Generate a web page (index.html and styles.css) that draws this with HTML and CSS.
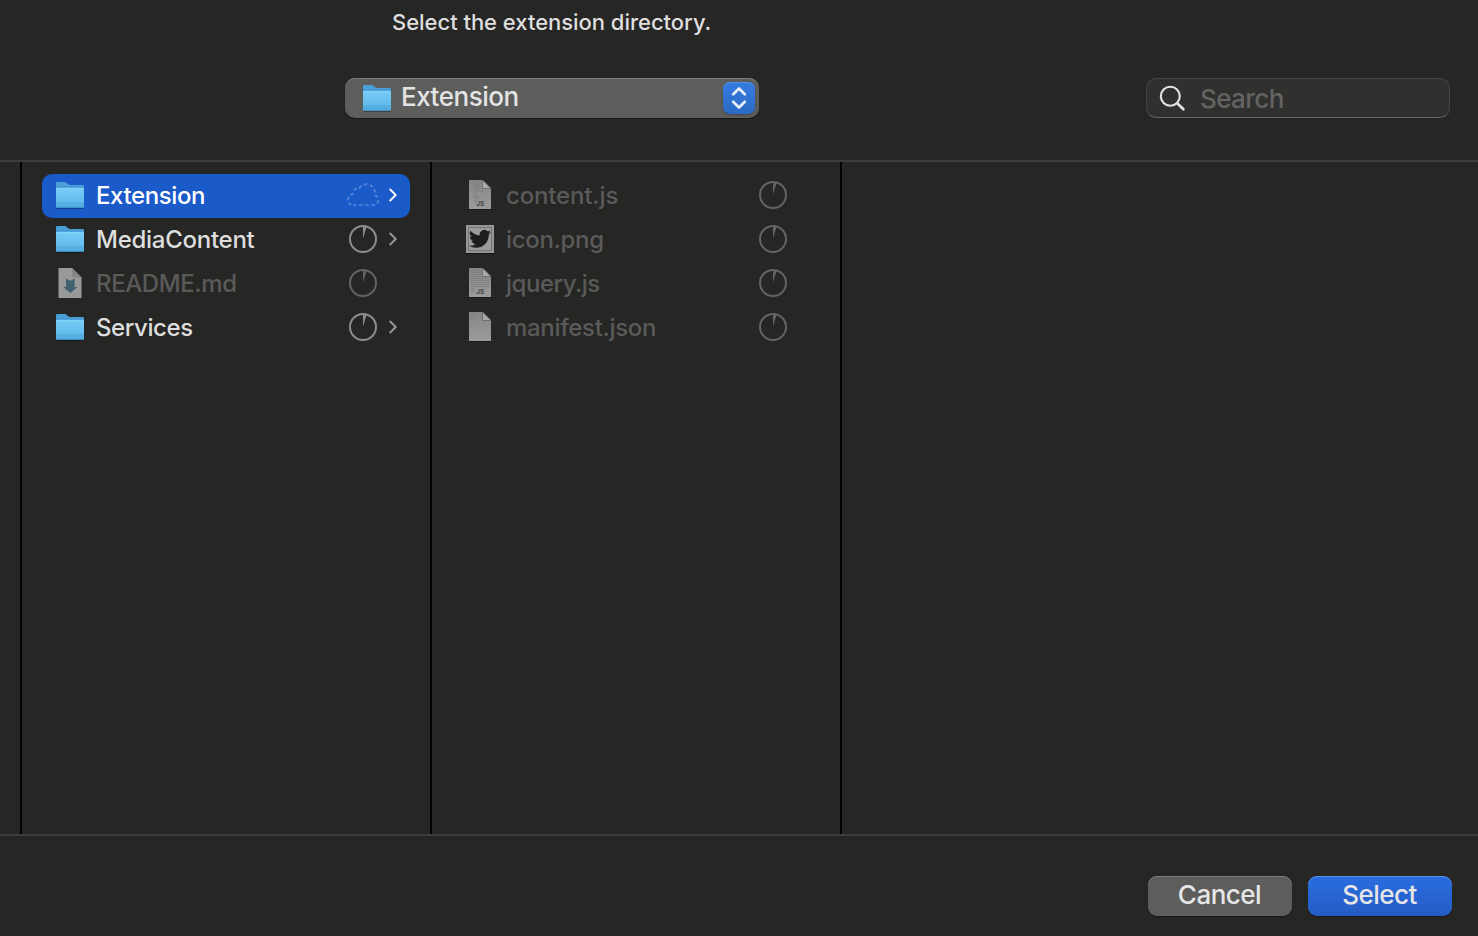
FILE: index.html
```html
<!DOCTYPE html>
<html lang="en">
<head>
<meta charset="utf-8">
<title>Select Directory</title>
<link rel="stylesheet" href="styles.css">
</head>
<body>
<svg class="defs" width="0" height="0" aria-hidden="true">
  <defs>
    <linearGradient id="folder-front" x1="0" y1="0" x2="0" y2="1">
      <stop offset="0" stop-color="#79cdf7"/><stop offset="1" stop-color="#58b4e8"/>
    </linearGradient>
    <linearGradient id="paper" x1="0" y1="0" x2="0" y2="1">
      <stop offset="0" stop-color="#868686"/><stop offset="1" stop-color="#9b9b9b"/>
    </linearGradient>
    <symbol id="folder" viewBox="0 0 32 32">
      <path d="M2.500 29.300h27" stroke="#000" stroke-opacity=".35" stroke-width="1.200"/>
      <path d="M2 4.200Q2 3 3.200 3h7.600q.9 0 1.600.7l1.800 1.600q.8.700 1.800.7h12.800q1.200 0 1.200 1.200V14H2z" fill="#4a9fd9"/>
      <path d="M2.500 8.300h27" stroke="#3184c4" stroke-width="1"/>
      <path d="M2 10q0-1.200 1.200-1.200h25.600q1.200 0 1.200 1.200v17.600q0 1.200-1.200 1.200H3.200q-1.200 0-1.200-1.200z" fill="url(#folder-front)"/>
      <path d="M3 9.300h26" stroke="#8bd8fb" stroke-width=".8"/>
      <path d="M2 24h28M2 26h28" stroke="#489fd3" stroke-width=".7"/>
      <path d="M2.500 28.200h27" stroke="#3d8fc5" stroke-width=".8"/>
    </symbol>
    <symbol id="page" viewBox="0 0 32 32">
      <path d="M5 30.400h22" stroke="#000" stroke-opacity=".35"/>
      <path d="M5 1h13.500L27 9.500V30H5z" fill="url(#paper)"/>
      <path d="M18.500 1v8.500H27z" fill="#a9a9a9" stroke="#666" stroke-width=".8"/>
    </symbol>
    <symbol id="pie" viewBox="0 0 28 28">
      <circle cx="14" cy="14" r="13" fill="none" stroke="currentColor" stroke-width="2"/>
      <path d="M14 13.500V1.500q2 0 3.600.5z" fill="currentColor"/>
    </symbol>
    <symbol id="chevron" viewBox="0 0 8 14">
      <path d="M1.200 1.500 6.700 7l-5.500 5.500" fill="none" stroke="currentColor" stroke-width="1.800" stroke-linecap="round" stroke-linejoin="round"/>
    </symbol>
  </defs>
</svg>
<div class="dialog">
  <header class="top">
    <p class="prompt">Select the extension directory.</p>
    <div class="toolbar">
      <button class="popup">
        <svg class="file-icon"><use href="#folder"/></svg>
        <span class="popup-label">Extension</span>
        <span class="stepper">
          <svg width="32" height="32" viewBox="0 0 32 32"><path d="m10.200 12.200 5.800-5.700 5.800 5.700M10.200 19.800l5.800 5.700 5.800-5.700" fill="none" stroke="#e8effb" stroke-width="2.700" stroke-linecap="round" stroke-linejoin="round"/></svg>
        </span>
      </button>
      <div class="search">
        <svg width="28" height="28" viewBox="0 0 28 28"><circle cx="11.300" cy="12.300" r="9.500" fill="none" stroke="#e2e2e2" stroke-width="2.100"/><path d="m18.200 19.300 6.200 6" stroke="#e2e2e2" stroke-width="2.700" stroke-linecap="round"/></svg>
        <span class="placeholder">Search</span>
      </div>
    </div>
  </header>
  <main class="browser">
    <div class="column gutter"></div>
    <div class="column">
      <div class="row selected">
        <svg class="file-icon"><use href="#folder"/></svg><span class="name">Extension</span>
        <svg class="cloud" viewBox="0 0 32 24"><path d="M6 22H26C29.500 22 31.200 19.800 31.200 17.200C31.200 14.500 29.800 12.800 28.200 12.200C28.600 6 24.500 1.200 19.500 1.200C15.500 1.200 13 3.400 11.800 6C8.200 4.800 5.500 7.400 5.600 11C2.500 12 .9 14.500.9 17C.9 20 3 22 6 22Z" fill="none" stroke="#5a86da" stroke-width="1.700" stroke-dasharray="3.500 2.600"/></svg>
        <svg class="chevron"><use href="#chevron"/></svg>
      </div>
      <div class="row">
        <svg class="file-icon"><use href="#folder"/></svg><span class="name wide">MediaContent</span>
        <svg class="pie"><use href="#pie"/></svg><svg class="chevron"><use href="#chevron"/></svg>
      </div>
      <div class="row disabled">
        <svg class="file-icon" viewBox="0 0 32 32"><path d="M4.500 1h13.500l9.500 9.500V31h-23z" fill="#999"/><path d="M18 1v7q0 2.500 2.500 2.500h7z" fill="#858585"/><path d="M12 11.500l4.300 2.300 4.300-2.300v8.500h2.700L16.300 26l-7-6H12z" fill="#3f626e"/></svg>
        <span class="name">README.md</span>
        <svg class="pie"><use href="#pie"/></svg><span class="chevron"></span>
      </div>
      <div class="row">
        <svg class="file-icon"><use href="#folder"/></svg><span class="name">Services</span>
        <svg class="pie"><use href="#pie"/></svg><svg class="chevron"><use href="#chevron"/></svg>
      </div>
    </div>
    <div class="column files">
      <div class="row disabled">
        <svg class="file-icon" viewBox="0 0 32 32"><use href="#page" width="32" height="32"/><path d="M8 4h5M8 6h8M10 8h6M10 10h4M10 12h9M9 14h4M8 17h7M10 19h6M10 21h4M10 23h3" stroke="#777" stroke-width=".6"/><text class="badge" x="12.300" y="27">JS</text></svg>
        <span class="name wide">content.js</span>
        <svg class="pie"><use href="#pie"/></svg><span class="chevron"></span>
      </div>
      <div class="row disabled">
        <svg class="file-icon" viewBox="0 0 32 32"><path d="M2 30.500h28" stroke="#000" stroke-opacity=".4"/><path d="M2 2h28v28H2z" fill="#969696"/><path d="M4.500 4.500h23v23h-23z" fill="#9b9b9b" stroke="#6c6c6c" stroke-width=".8"/><path transform="translate(5 4.800) scale(.92)" d="M23.950 4.570a10 10 0 0 1-2.820.77 4.960 4.960 0 0 0 2.160-2.720c-.95.550-2 .950-3.130 1.180a4.920 4.920 0 0 0-8.380 4.480C7.690 8.090 4.070 6.130 1.640 3.160a4.920 4.920 0 0 0 1.520 6.570 4.900 4.900 0 0 1-2.230-.61v.06a4.920 4.920 0 0 0 3.950 4.830 5 5 0 0 1-2.210.08 4.940 4.940 0 0 0 4.600 3.420A9.870 9.870 0 0 1 0 19.540a13.990 13.990 0 0 0 7.550 2.210c9.050 0 14-7.500 14-13.980 0-.21 0-.42-.02-.63a9.940 9.940 0 0 0 2.460-2.550z" fill="#1d1d1d"/></svg>
        <span class="name">icon.png</span>
        <svg class="pie"><use href="#pie"/></svg><span class="chevron"></span>
      </div>
      <div class="row disabled">
        <svg class="file-icon" viewBox="0 0 32 32"><use href="#page" width="32" height="32"/><path d="M7 3.500h10M7 5.500h10M7 7.500h10M7 9.500h10M7 11.500h18M7 13.500h18M7 15.500h18M7 17.500h18M7 19.500h18M7 21.500h4M7 23.500h4M7 25.500h4" stroke="#7b7b7b" stroke-width=".6"/><text class="badge" x="12.300" y="27">JS</text></svg>
        <span class="name tight">jquery.js</span>
        <svg class="pie"><use href="#pie"/></svg><span class="chevron"></span>
      </div>
      <div class="row disabled">
        <svg class="file-icon" viewBox="0 0 32 32"><use href="#page" width="32" height="32"/><path d="M6 3h4M6 5h6M6 7h3" stroke="#777" stroke-width=".6"/></svg>
        <span class="name">manifest.json</span>
        <svg class="pie"><use href="#pie"/></svg><span class="chevron"></span>
      </div>
    </div>
  </main>
  <footer class="actions">
    <button class="button">Cancel</button>
    <button class="button primary">Select</button>
  </footer>
</div>
</body>
</html>
```
FILE: styles.css
```css
* { box-sizing: border-box; }
body { margin: 0; background: #262625; font-family: Inter, "Liberation Sans", sans-serif; font-weight: 500; color: #dfdfdf; }
button { font: inherit; color: inherit; border: 0; padding: 0; }
.defs { position: absolute; }
.dialog { display: flex; flex-direction: column; width: 1478px; height: 936px; overflow: hidden; }
.top { height: 162px; border-bottom: 2px solid #3d3d3c; }
.prompt { margin: 0; padding: 8px 0 0 392px; height: 78px; font-size: 22px; line-height: 28px; letter-spacing: -0.03px; white-space: nowrap; }
.toolbar { display: flex; justify-content: space-between; padding: 0 28px 0 345px; }
.popup { display: flex; align-items: center; width: 414px; height: 40px; padding: 0 4px 0 16px; border-radius: 10px; background: #5d5d5c; box-shadow: inset 0 1px #7b7b7a, 0 1px 1px #181818; }
.file-icon { width: 32px; height: 32px; flex: none; display: block; }
.popup-label { flex: 1; margin-left: 8px; text-align: left; font-size: 26px; line-height: 36px; padding-bottom: 2px; letter-spacing: -0.5px; color: #e4e4e4; }
.stepper { width: 32px; height: 32px; border-radius: 7px; background: linear-gradient(#347ce0, #2b69c4); box-shadow: inset 0 1px #5390e5, 0 1px 2px #444; }
.stepper svg, .search svg { display: block; }
.search { display: flex; align-items: center; width: 304px; height: 40px; padding-left: 12px; border: 1px solid #454544; border-bottom-color: #686867; border-radius: 10px; background: #30302f; }
.placeholder { margin-left: 13px; font-size: 26px; letter-spacing: -0.6px; color: #636362; }
.browser { display: flex; flex: 1; }
.column { width: 410px; padding: 12px 20px; border-right: 2px solid #000; }
.gutter { width: 22px; padding: 0; }
.row { display: flex; align-items: center; width: 368px; height: 44px; padding: 0 12px; border-radius: 10px; font-size: 24px; color: #dedede; }
.row .file-icon { margin-top: -2px; }
.name { flex: 1; margin-left: 10px; line-height: 32px; letter-spacing: -0.4px; white-space: nowrap; }
.name.wide { letter-spacing: -0.27px; }
.files .name { letter-spacing: -0.32px; }
.files .name.wide { letter-spacing: -0.15px; }
.files .name.tight { letter-spacing: -0.48px; }
.selected { background: #1a5ac9; color: #fff; }
.disabled { color: #5a5a59; }
.pie { width: 28px; height: 28px; margin: -2px 12px 0 0; color: #8c8c8b; }
.disabled .pie { color: #636362; }
.cloud { width: 32px; height: 24px; margin: -2px 10px 0 0; }
.chevron { width: 8px; height: 14px; margin: -2px 1px 0 0; color: #999998; }
.selected .chevron { color: #fff; }
.badge { font: 600 6.500px Inter, sans-serif; fill: #393939; }
.actions { display: flex; justify-content: flex-end; gap: 16px; height: 102px; padding: 40px 26px 0 0; border-top: 2px solid #3d3d3c; }
.button { width: 144px; height: 40px; padding: 0 1px 3px 0; border-radius: 9px; background: #5d5d5c; box-shadow: inset 0 1px #7b7b7a, 0 1px 1px #181818; font-size: 26px; letter-spacing: -0.5px; color: #e6e6e6; }
.primary { background: linear-gradient(#2a6de0, #245cc4); box-shadow: inset 0 1px #5c8fe8, 0 1px 1px #181818; }
```
